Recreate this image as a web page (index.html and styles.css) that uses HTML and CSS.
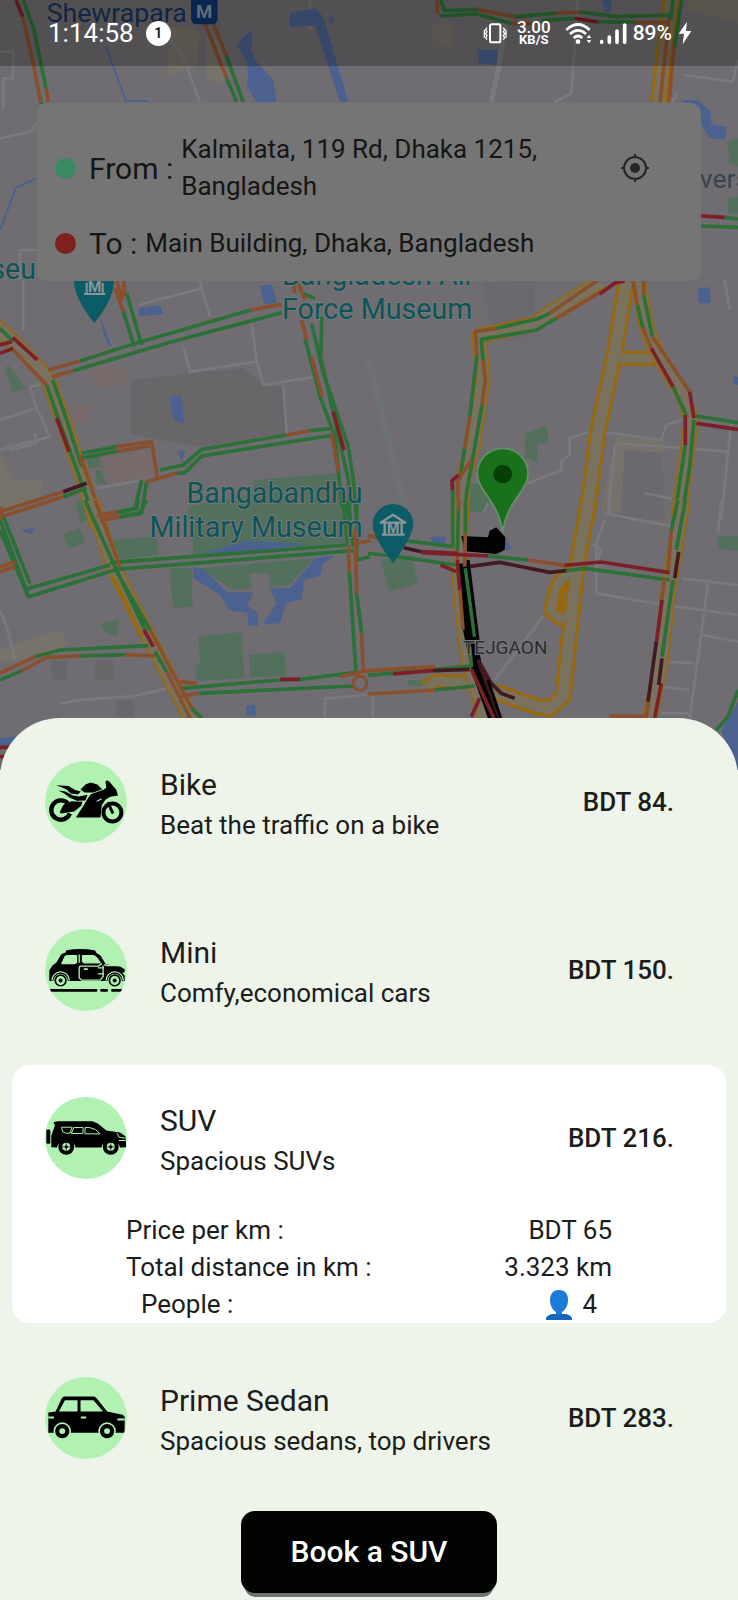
FILE: index.html
```html
<!DOCTYPE html>
<html lang="en">
<head>
<meta charset="utf-8">
<meta name="viewport" content="width=device-width, initial-scale=1">
<title>Choose a ride</title>
<link rel="stylesheet" href="styles.css">
</head>
<body>
<main class="screen">
  <section class="hero" aria-label="Route map">
    <svg class="map" viewBox="0 0 2214 2310" preserveAspectRatio="xMidYMin slice" role="img" aria-label="Traffic map of Dhaka">
      <rect width="2214" height="2310" fill="#6f6d71"/>

      <!-- north west -->
      <g>
        <path fill="#77736a" d="M510 80 600 90 590 200 500 230zM620 110 680 130 670 250 620 240z"/>
        <path class="lane" d="M0 155H40V235H10V330M0 415 90 395 110 370M560 200 600 306M60 840V750H110M480 70 560 190M930 0V90"/>
        <path class="water" d="M755 88 710 135 740 185 745 220 740 255 768 306H830L820 240 765 180 755 150zM870 40 945 25 970 50 1045 306H1020L945 75 870 82zM985 65 995 40 1003 70z"/>
        <path class="river" d="M318 140 378 303H445M0 690 48 563 110 535"/>
        <path class="go" d="M70 0 102 90 138 265M678 165 730 306M680 235 710 306M120 290 124 312"/>
        <path class="slow" d="M68 50 98 180 122 306M138 265 145 306M615 70 680 235M640 70 678 165"/>
        <path class="jam" d="M48 0 68 50"/>
        <text class="metro" x="140" y="66">Shewrapara</text>
        <rect x="573" y="-15" width="80" height="88" rx="16" fill="#10346a"/>
        <text x="588" y="54" font-size="56" font-weight="700" fill="#8190a5">M</text>
        <text class="place" x="108" y="838" text-anchor="end">Museu</text>
        <path class="slow" d="M350 843 368 900M372 843V890"/>
      </g>

      <!-- north east -->
      <g transform="translate(1104 0)">
        <path fill="#77736a" d="M195 70H250V140H195zM960 0H1110V70L960 30z"/>
        <path class="lane wide" d="M410 60 395 190 370 306"/>
        <path class="lane" d="M630 0 610 280 560 306M950 225 1095 245 1110 180M930 280 910 306"/>
        <path class="water" d="M330 148 388 150 386 195 332 190zM700 0H732L728 35 712 38zM940 300H990L1028 335 1030 372 1076 382 1070 418 1025 415 998 370 990 340z"/>
        <path class="park" d="M1078 430 1110 415V500L1085 490zM1080 595 1110 590V640L1080 640z"/>
        <path class="casing wide" d="M910 0 872 306"/>
        <path class="toll wide" d="M910 0 872 306"/>
        <path class="slow" d="M905 40 876 306M920 120 903 306M208 0V42M330 28 435 50 480 50M430 70H490M560 40 635 36M800 68H900"/>
        <path class="go" d="M218 0 230 32 330 28M215 48 325 42 430 70M440 50 560 40M520 62 620 55M635 36 745 50 905 45M690 66H800M915 0 908 60M940 0 920 140M1000 678 1110 682M1070 652 1110 657"/>
        <path class="jam" d="M620 55 690 66M1000 648 1070 652"/>
        <text x="995" y="563" font-size="80" fill="#38434e">vers</text>
      </g>

      <!-- centre west -->
      <g transform="translate(0 840)">
        <path fill="#69666a" d="M395 300 530 285 730 265 790 315 850 320 860 460 600 500 480 480 390 460z"/>
        <path fill="#776b6b" d="M265 260H380V310L290 325zM215 375H275V430H220zM305 530 455 515 470 590 320 610z"/>
        <path fill="#77736a" d="M0 520 40 600 130 600 120 660 0 690z"/>
        <path class="lane" d="M70 0V150M415 75 605 25 600 0M605 25 630 110M550 200 570 275 770 245 755 130M770 245 790 315 945 290M850 315 860 460M0 420 110 385 90 320 150 310M110 385 150 470 0 510M30 490 35 510 110 490 105 460M290 625 430 600"/>
        <path class="water" d="M415 85 480 75 490 103 418 108zM780 18 815 12 832 68 792 72zM508 350 545 348 553 432 522 420zM535 512H555L545 548zM300 110 335 200 325 195 310 160z"/>
        <path class="park" d="M15 265 25 255 78 325 38 338zM260 530H300L303 560 265 565zM285 570 305 572 318 610 290 612zM565 680 760 640 760 600 1010 580 1030 720H565zM228 665 255 655 275 720H240z"/>
        <path class="casing" d="M-20 130 40 185 140 290 190 420 250 600 290 740"/>
        <path class="toll" d="M-20 130 40 185 140 290 190 420 250 600 290 740"/>
        <path class="go" d="M0 145 40 185M140 315 180 430 285 720M158 300 200 420 245 560M240 243 400 192 752 90M220 272 500 190 845 98M380 40 425 195M370 95 403 200M245 520 350 500M245 534 350 514M480 570 550 555 605 508 860 465M930 452 990 446M530 580 555 578 605 528 990 467M425 600 405 685 350 697M440 605 425 700 350 712M190 650 260 625M915 175 960 350 1005 470 1030 720M935 130 970 280 1045 500 1060 600 1070 720M965 110 963 220M955 200 1000 400 1045 600 1050 720M905 40 945 55"/>
        <path class="slow" d="M345 25 370 95M370 0 375 40M145 270 240 243M155 290 220 272M40 210 140 315M350 500 455 485 472 592M350 514 450 498M440 605 530 580M860 465 930 452M752 90 845 73M895 10 915 60M880 0 885 40M905 120 920 180M935 230 967 350M995 460 1015 575M0 695 190 635M0 712 190 650M5 680V720M240 525 305 715M290 705 350 697M300 720 350 712"/>
        <path class="jam" d="M0 195 35 185M0 220 40 205M38 172 112 240M170 415 207 515M1000 395 1032 510"/>
        <path class="stop" d="M190 635 260 610"/>
        <path fill="#0b5c66" d="M222 0H342Q345 50 283 130 220 50 222 0z"/>
        <path d="M252 42H316M260 40V8M308 40V8" fill="none" stroke="#8a9698" stroke-width="6"/>
        <text x="264" y="36" font-size="46" font-weight="700" fill="#8a9698">M</text>
      </g>

      <!-- centre east -->
      <g transform="translate(1104 840)">
        <path fill="#6b696d" d="M760 460 880 480 890 720H740zM340 10 500 0 500 130 470 190 380 180z"/>
        <path fill="#75726c" d="M745 460 890 480V520L770 510 760 700 700 690z"/>
        <path d="M0 230 110 680" fill="none" stroke="#6f7275" stroke-width="22"/>
        <path class="lane" d="M1070 0 1085 90M480 610 580 570 582 540 605 525V475L665 455 740 460 880 480 895 435 970 410M745 490 1080 515 1060 720M830 640 910 655M740 500 720 700M1080 515 1090 430"/>
        <path class="water" d="M990 25 1025 22 1028 70 993 70zM1095 290H1110V315L1098 312z"/>
        <path class="park" d="M470 462 535 437 542 487 508 492 510 548 472 535zM305 612H355L365 680 330 695H300z"/>
        <path class="casing" d="M700 5 540 102 505 130 333 168 345 300 315 500 285 600 280 720"/>
        <path class="toll" d="M700 5 540 102 505 130 333 168 345 300 315 500 285 600 280 720"/>
        <path class="casing wide" d="M775 0 740 220 690 450 655 720"/>
        <path class="casing" d="M755 235H870"/>
        <path class="toll wide" d="M775 0 740 220 690 450 655 720"/>
        <path class="toll thin" d="M755 235H870"/>
        <path class="casing" d="M810 0 835 140 865 215 945 345 970 420 930 720"/>
        <path class="toll" d="M810 0 835 140 865 215 945 345 970 420 930 720"/>
        <path class="go" d="M545 100 505 118 385 145M565 115 505 150 340 178 345 240M327 225 305 410M342 375 315 530 295 640 292 720M290 505 275 600M254 630V720M808 75 825 145M827 45 853 170M915 320 955 405M952 495 918 720M978 420 965 560 940 720M985 408 1110 428M272 680V720"/>
        <path class="slow" d="M690 0 545 100M700 35 565 115M385 145 322 155 327 225M345 240 352 300 342 375M305 410 290 505M310 540 270 600V690M795 0 808 75M827 0V45M825 145 850 205M853 170 965 335"/>
        <path class="jam" d="M770 3 740 10 695 42M272 585 252 602 254 630M850 205 915 320M965 335 978 415M952 405V495M985 430 1110 448"/>
      </g>

      <!-- south west -->
      <g transform="translate(0 1500)">
        <path fill="#77736a" d="M0 450 100 410 180 390 205 430 130 470 0 490z"/>
        <path fill="#6a676b" d="M150 480H200V540H160zM285 480H340V540H285zM345 600H400V650H350z"/>
        <path class="lane" d="M0 330 20 380 45 480M180 612 240 600 400 588 530 560M975 654V595L1100 585"/>
        <path class="park" d="M575 40 1035 20 1040 130 580 165zM600 205 940 175 870 255 700 270zM508 205H575L578 320 520 323zM340 120 470 108 475 165 360 180zM190 100 240 85 255 128 205 146zM300 372 358 355 352 408 320 400zM595 408 725 397 733 535 588 542 585 500 600 490zM748 465 853 456 858 528 750 532zM228 10 245 0 262 60 240 68z"/>
        <path class="water" d="M610 160 740 122 920 132 800 150 650 158zM578 200 610 208 680 275 760 278 742 318 772 335 775 378 745 375 742 338 688 332 660 285 580 235zM945 175 1005 165 970 190 960 228 912 240 905 298 858 310 840 370 790 373 825 310 800 265 870 265zM738 618 765 613 768 645 740 648zM60 90 105 85 95 103zM0 715 50 708 30 740 0 735z"/>
        <path fill="#6f6d71" d="M748 220H808V262L830 310 790 370 770 335 742 318 760 280z"/>
        <path class="casing" d="M275 0 340 200 460 440 580 670"/>
        <path class="toll" d="M275 0 340 200 460 440 580 670"/>
        <path class="casing edge" d="M338 230 425 410"/>
        <path class="go" d="M255 0 345 200 435 390M350 215 450 390M0 60 78 268 330 195M10 50 90 250M0 90 85 290 345 210M330 188 1045 135M345 208 1060 152M105 470 180 450 445 437M0 540 65 512M240 468 375 464M465 455 500 515M575 625 605 654M545 565 840 540 900 538 1065 518M595 580 1060 558M1048 215 1068 520M1070 280 1085 400M1040 0 1060 140M1030 0 1042 130M1070 10V180L1110 170M440 0 420 38 360 50M415 0 410 25 350 38"/>
        <path class="slow" d="M285 0 360 200M0 200 45 185M0 215 45 200M0 520 105 470M65 512 140 472 240 468M375 464 465 468M450 390 575 625M500 515 570 654M540 545 590 550M540 590 595 580M1045 135 1048 215M1065 90 1070 280M1085 400 1090 520M1020 530 1110 510M1075 130 1110 122M290 48 350 38M300 62 360 50"/>
        <circle cx="1080" cy="550" r="21" fill="none" stroke="#8a4f2c" stroke-width="9"/>
        <path class="jam" d="M432 390 460 440M840 538H900M0 742H30M0 770H12"/>
      </g>

      <!-- south east -->
      <g transform="translate(1104 1500)">
        <path class="lane" d="M710 40 915 80M710 60 685 130V280L860 310 1110 345M670 130 700 150 685 190M940 235 1110 255M1020 250 1000 400 965 654M1000 405 1110 425M890 485 980 490M880 560 965 570M880 640H960M1060 0 1050 100M525 350 380 540M310 38 350 30 360 10M15 580V654"/>
        <path class="park" d="M38 180 130 165 150 250 65 275zM1050 110 1110 108V152L1052 148zM300 0H350L345 35 310 38zM120 540H200V560L120 556z"/>
        <path class="water" d="M188 110H232V130H192zM410 110 432 148 390 152zM1110 605 1060 690 1110 810z"/>
        <path class="casing" d="M310 545 200 545 172 565M605 215 570 250 548 330 575 355 610 350"/>
        <path class="casing wide" d="M662 0 625 210 585 590 545 626 500 618 380 575"/>
        <path class="toll thin" d="M310 545 200 545 172 565M605 215 570 250 548 330 575 355 610 350"/>
        <path class="toll wide" d="M662 0 625 210 585 590 545 626 500 618 380 575"/>
        <path d="M582 270 575 330" stroke="#97690c" stroke-width="18" stroke-linecap="round" fill="none"/>
        <path class="casing" d="M945 0 900 280 880 480 845 660M280 0 275 250 295 450 350 660"/>
        <path class="toll" d="M945 0 900 280 880 480 845 660M280 0 275 250 295 450 350 660"/>
        <path fill="#020203" d="M280 108 360 112 365 92 385 82 412 112 410 150 385 162 290 154z"/>
        <path d="M286 190 300 380 330 520 380 660" fill="none" stroke="#020203" stroke-width="34"/>
        <path class="go" d="M254 0V140L0 108M272 0 268 150M292 0V110M0 160 75 168 265 195M360 168 480 180M595 212 650 205 905 240M930 0 910 90M952 0 925 150M915 240 882 470M292 205 320 410M305 440 310 498 0 526M200 570 320 558M1110 570 1080 650 1045 690"/>
        <path class="slow" d="M910 90 900 220M480 180 590 196M268 150V180M292 100 290 200M890 235 880 310M0 512 200 500M0 582 200 570M275 260 285 390M842 605 835 650 725 648M0 105 110 140M272 0V30"/>
        <path class="jam" d="M160 155 270 160M160 158 360 168M218 195 265 215M268 180 275 270M590 196 700 186 905 218M882 300 865 430M75 522 195 512M310 508 380 660M335 595 310 650M880 550 860 654"/>
        <path class="stop" d="M108 143 160 155M300 200 395 187 545 217 595 212M932 155 920 235M865 425 840 605M882 475 872 555M195 512 305 508M330 480 370 550 400 580 440 595M330 480 395 654"/>
        <path d="M300 180 330 420M360 540 398 654" fill="none" stroke="#020203" stroke-width="9"/>
        <text x="285" y="462" font-size="57" fill="#2c2c2f" stroke="#77767a" stroke-width="6" paint-order="stroke">TEJGAON</text>
        <path fill="#0b5c66" d="M75 12A61 61 0 0 1 136 73Q134 110 75 190 14 110 14 73A61 61 0 0 1 75 12z"/>
        <path d="M38 68 75 44 112 68zM42 104H110M50 102V68M101 102V68" fill="none" stroke="#8a9698" stroke-width="7"/>
        <text x="57" y="98" font-size="42" font-weight="700" fill="#8a9698">M</text>
      </g>

      <!-- place labels and destination pin -->
      <text class="place" x="846" y="854">Bangladesh Air</text>
      <text class="place" x="846" y="957">Force Museum</text>
      <text class="place" x="1088" y="1508" text-anchor="end">Bangabandhu</text>
      <text class="place" x="1088" y="1610" text-anchor="end">Military Museum</text>
      <path fill="#1a711b" stroke="#6a906b" stroke-width="5" d="M1508 1345A76 76 0 0 1 1584 1421C1584 1475 1520 1500 1508 1598 1496 1500 1432 1475 1432 1421A76 76 0 0 1 1508 1345z"/>
      <circle cx="1508" cy="1422" r="28" fill="#053f06"/>
    </svg>

    <div class="overlay">
      <header class="status">
        <span class="status__left">
          <time class="status__time">1:14:58</time>
          <span class="status__count">1</span>
        </span>
        <span class="status__right">
          <svg width="24" height="24" viewBox="0 0 72 72" fill="none" stroke="#fff" aria-label="Vibrate" role="img">
            <rect x="21" y="10" width="31" height="54" rx="5" stroke-width="6"/>
            <path d="M12 20 8 26 12 32 8 38 12 44 8 50 12 56M4 26V50M61 20 65 26 61 32 65 38 61 44 65 50 61 56M69 26V50" stroke-width="4"/>
          </svg>
          <span class="status__speed"><b>3.00</b><small>KB/S</small></span>
          <svg width="28" height="24" viewBox="0 0 84 72" fill="none" stroke="#fff" aria-label="Wi-Fi" role="img">
            <path d="M4 27Q39-6 74 27M15 39Q39 17 63 39M26 51Q39 39 52 51" stroke-width="8"/>
            <circle cx="39" cy="62" r="7" fill="#fff" stroke="none"/>
            <path d="M65 51 72 41 79 51zM65 57 72 67 79 57z" fill="#fff" stroke="none"/>
          </svg>
          <svg width="28" height="24" viewBox="0 0 84 72" stroke="#fff" stroke-width="11" stroke-linecap="round" aria-label="Signal" role="img">
            <path d="M8 62V64M31 48V64M54 30V64M77 12V64"/>
          </svg>
          <span class="status__battery">89%</span>
          <svg width="14" height="24" viewBox="0 0 42 72" fill="#fff" aria-label="Charging" role="img"><path d="M27 2 2 38H18L14 70 40 30H24z"/></svg>
        </span>
      </header>

      <section class="trip" aria-label="Trip">
        <div class="trip__row">
          <span class="dot dot--from"></span>
          <span class="trip__label">From :</span>
          <span class="trip__place">Kalmilata, 119 Rd, Dhaka 1215, Bangladesh</span>
          <button class="locate" type="button" aria-label="Use my location">
            <svg width="30" height="30" viewBox="0 0 30 30" fill="none" stroke="#262626" stroke-width="2">
              <circle cx="15" cy="15" r="11"/><circle cx="15" cy="15" r="5" fill="#262626" stroke="none"/>
              <path d="M15 1V5M15 25V29M1 15H5M25 15H29"/>
            </svg>
          </button>
        </div>
        <div class="trip__row">
          <span class="dot dot--to"></span>
          <span class="trip__label">To :</span>
          <span class="trip__place">Main Building, Dhaka, Bangladesh</span>
        </div>
      </section>
    </div>
  </section>

  <section class="sheet" aria-label="Rides">
    <ul class="rides">
      <li class="ride">
        <button class="ride__head" type="button">
          <svg class="ride__icon" viewBox="44 32 247 247" aria-hidden="true">
            <path d="M78 105 115 107 135 119 152 124 143 133 122 130 108 117z"/>
            <path d="M84 121 106 124 128 136 146 139 172 134 166 151 140 152 119 143 103 131z"/>
            <path d="M151 118 166 103 181 97 202 103 216 117 190 127 163 127z"/>
            <path d="M226 94 232 90 239 95 252 111 258 117 264 136 240 140 226 149 215 165 211 202H137L151 180 157 171 173 145 182 132 222 118 229 112z"/>
            <path d="M100 164 124 153 157 155 153 167 132 184 91 190 89 184z"/>
            <path d="M113 160A29 29 0 1 0 119 190" fill="none" stroke="#000" stroke-width="13"/>
            <circle cx="247" cy="187" r="27" fill="none" stroke="#000" stroke-width="12"/>
            <path d="M235 160 247 187" stroke="#000" stroke-width="9" stroke-linecap="round"/>
            <path d="M197 153 214 144 215 148 202 154z" fill="#b1f2b2"/>
          </svg>
          <span class="ride__text"><span class="ride__name">Bike</span><span class="ride__note">Beat the traffic on a bike</span></span>
          <span class="ride__price">BDT 84.</span>
        </button>
      </li>
      <li class="ride">
        <button class="ride__head" type="button">
          <svg class="ride__icon" viewBox="44 41 247 247" aria-hidden="true">
            <path d="M57 198V165L67 150 78 143 93 117 107 111V106Q150 97 195 106L199 113 211 121 227 147 270 154 284 162V170L277 174 284 181V198H276A22 22 0 0 0 232 198H113A22 22 0 0 0 69 198z"/>
            <g fill="none" stroke="#b1f2b2" stroke-width="4" stroke-linejoin="round">
              <path fill="#b1f2b2" d="M95 145 105 123 112 121H139V142L134 145zM157 121H190L199 127 210 143H163L157 139z"/>
              <path d="M147 118V143M147 155V188L154 195H210L219 184V151M147 155 152 153H205L215 145M203 158H222M203 176H222M222 148 230 151H285"/>
              <path d="M65 196A26 26 0 0 1 117 196M228 196A26 26 0 0 1 280 196"/>
            </g>
            <path d="M161 162H173" stroke="#b1f2b2" stroke-width="5"/>
            <g fill="#b1f2b2" stroke="#000" stroke-width="5"><circle cx="91" cy="196" r="16"/><circle cx="254" cy="196" r="16"/></g>
            <circle cx="91" cy="196" r="6"/><circle cx="254" cy="196" r="6"/>
            <path d="M48 226H198M214 226H230M247 226H288" stroke="#000" stroke-width="8" stroke-linecap="round"/>
          </svg>
          <span class="ride__text"><span class="ride__name">Mini</span><span class="ride__note">Comfy,economical cars</span></span>
          <span class="ride__price">BDT 150.</span>
        </button>
      </li>
      <li class="ride ride--selected">
        <button class="ride__head" type="button" aria-pressed="true">
          <svg class="ride__icon" viewBox="44 36 247 247" aria-hidden="true">
            <path d="M69 112 82 109H187L203 116 229 137 270 143 286 154 289 187 270 188A29 29 0 0 0 214 188H136A29 29 0 0 0 80 188L63 187V152L74 121z"/>
            <rect x="48" y="134" width="12" height="43" rx="4"/>
            <g fill="none" stroke="#b1f2b2" stroke-width="3" stroke-linejoin="round">
              <path d="M94 127H126L119 145H106L97 140zM131 128H159L158 146H123zM165 128H178L196 134 210 147H164zM261 145 267 157 285 160M266 167H286"/>
            </g>
            <circle cx="108" cy="186" r="24"/><circle cx="242" cy="186" r="24"/>
            <g fill="#b1f2b2"><circle cx="108" cy="186" r="12"/><circle cx="242" cy="186" r="12"/></g>
            <path d="M108 175V197M97 186H119M242 175V197M231 186H253" stroke="#000" stroke-width="2"/>
            <circle cx="108" cy="186" r="5"/><circle cx="242" cy="186" r="5"/>
          </svg>
          <span class="ride__text"><span class="ride__name">SUV</span><span class="ride__note">Spacious SUVs</span></span>
          <span class="ride__price">BDT 216.</span>
        </button>
        <dl class="facts">
          <div class="facts__row"><dt>Price per km :</dt><dd>BDT 65</dd></div>
          <div class="facts__row"><dt>Total distance in km :</dt><dd>3.323 km</dd></div>
          <div class="facts__row facts__row--inset"><dt>People :</dt><dd>
            <svg class="person" width="26" height="30" viewBox="0 0 26 30" aria-hidden="true">
              <path d="M13 0C19 0 22 4 22 10 22 16 19 20 16 22V24C21 24 26 25 26 30H0C0 25 5 24 10 24V22C7 20 4 16 4 10 4 4 7 0 13 0z" fill="#1b7bd8"/>
              <path d="M0 30C0 25 5 24 10 24Q13 26 16 24C21 24 26 25 26 30z" fill="#1765bb"/>
            </svg>4</dd></div>
        </dl>
      </li>
      <li class="ride">
        <button class="ride__head" type="button">
          <svg class="ride__icon" viewBox="44 33 247 247" aria-hidden="true">
            <path fill-rule="evenodd" d="M54 140 76 137 95 96 101 92H192L199 96 231 137 278 147 284 153V201H54zM86 137 104 103H142V137zM151 103H190L219 137H151z"/>
            <path d="M152 155H168M54 155H71M262 161H284" stroke="#b1f2b2" stroke-width="6"/>
            <g stroke="#b1f2b2" stroke-width="5"><circle cx="96" cy="196" r="24"/><circle cx="231" cy="196" r="24"/></g>
            <g fill="#b1f2b2"><circle cx="96" cy="196" r="9"/><circle cx="231" cy="196" r="9"/></g>
          </svg>
          <span class="ride__text"><span class="ride__name">Prime Sedan</span><span class="ride__note">Spacious sedans, top drivers</span></span>
          <span class="ride__price">BDT 283.</span>
        </button>
      </li>
    </ul>
    <button class="book" type="button">Book a SUV</button>
  </section>
</main>
</body>
</html>
```

FILE: styles.css
```css
* { box-sizing: border-box; }

body {
  margin: 0;
  background: #eef4ea;
  color: #1b1d1a;
  font-family: Roboto, "Noto Sans", sans-serif;
  font-size: 26px;
  line-height: 37px;
}

button {
  border: 0;
  padding: 0;
  background: none;
  color: inherit;
  font: inherit;
  text-align: left;
  cursor: pointer;
}

.screen {
  display: flex;
  flex-direction: column;
  min-height: 100vh;
}

/* Map with the trip card on top of it */
.hero { display: grid; }

.map,
.overlay { grid-area: 1 / 1; min-width: 0; }

.map {
  display: block;
  width: 100%;
  height: 100%;
}

.map path { stroke-linejoin: round; }
.water { fill: #4b6190; }
.park { fill: #53705c; }
.river { fill: none; stroke: #4b6190; stroke-width: 6; }
.lane { fill: none; stroke: #7a797d; stroke-width: 8; }
.lane.wide { stroke-width: 16; }
.go, .slow, .jam, .stop { fill: none; stroke-width: 11; }
.go { stroke: #2b7036; }
.slow { stroke: #8a4f2c; }
.jam { stroke: #7d1f28; }
.stop { stroke: #421a20; }
.casing { fill: none; stroke: #97690c; stroke-width: 46; }
.casing.wide { stroke-width: 52; }
.casing.edge { stroke-width: 12; }
.toll { fill: none; stroke: #78725f; stroke-width: 36; }
.toll.wide { stroke-width: 34; }
.toll.thin { stroke-width: 28; }
.metro { fill: #1a335c; font-size: 80px; }
.place {
  fill: #0b5558;
  stroke: #77767a;
  stroke-width: 6px;
  paint-order: stroke;
  font-size: 86px;
}

.status {
  display: flex;
  align-items: center;
  justify-content: space-between;
  height: 66px;
  padding: 0 46px 0 48px;
  background: rgba(0, 0, 0, 0.26);
  color: #fff;
}

.status__left,
.status__right { display: flex; align-items: center; }
.status__left { gap: 12px; }
.status__right { gap: 6px; }

.status__count {
  width: 25px;
  height: 25px;
  border-radius: 50%;
  background: #fff;
  color: #222;
  font-size: 14px;
  font-weight: 700;
  line-height: 25px;
  text-align: center;
}

.status__speed {
  display: flex;
  flex-direction: column;
  align-items: center;
  margin: 0 8px 0 4px;
  font-size: 17px;
  line-height: 14px;
}

.status__speed b { font-weight: 500; }
.status__speed small { font-size: 13px; font-weight: 700; line-height: 12px; }
.status__battery { font-size: 21px; font-weight: 500; }

.trip {
  display: flex;
  flex-direction: column;
  gap: 20px;
  margin: 37px;
  padding: 28px 18px 19px;
  border-radius: 10px;
  background: #757575;
  color: #161616;
}

.trip__row { display: flex; align-items: center; }
.trip__label { margin: 0 8px 0 13px; font-size: 30px; white-space: nowrap; }
.trip__place { flex: 1; }

.dot {
  flex: none;
  width: 21px;
  height: 21px;
  border-radius: 50%;
}

.dot--from { background: #3a8a61; }
.dot--to { background: #7e211c; }
.locate { flex: none; margin: 0 33px; height: 30px; line-height: 0; }

/* Ride list */
.sheet {
  position: relative;
  flex: 1;
  display: flex;
  flex-direction: column;
  align-items: center;
  margin-top: -52px;
  padding: 11px 12px 8px;
  border-radius: 60px 60px 0 0;
  background: #eef4ea;
}

.rides {
  display: flex;
  flex-direction: column;
  gap: 22px;
  align-self: stretch;
  margin: 0;
  padding: 0;
  list-style: none;
}

.ride { border-radius: 18px; }
.ride--selected { background: #fff; }

.ride__head {
  display: flex;
  align-items: center;
  gap: 33px;
  width: 100%;
  height: 146px;
  padding: 0 52px 0 33px;
}

.ride__icon {
  flex: none;
  width: 82px;
  height: 82px;
  border-radius: 50%;
  background: #b1f2b2;
}

.ride__text {
  flex: 1;
  display: flex;
  flex-direction: column;
  padding-top: 2px;
}

.ride__name { font-size: 30px; line-height: 44px; }
.ride__price { font-weight: 500; }

.facts { margin: 0; padding-top: 1px; }

.facts__row {
  display: flex;
  justify-content: space-between;
  padding: 0 114px;
}

.facts__row--inset { padding: 0 129px; }
.facts dd { display: flex; align-items: center; gap: 10px; margin: 0; }

.book {
  min-width: 256px;
  height: 82px;
  margin-top: 20px;
  padding-bottom: 2px;
  border-radius: 14px;
  background: #010401;
  box-shadow: 0 8px 0 -4px #6f736d;
  color: #fff;
  font-size: 30px;
  font-weight: 500;
  text-align: center;
}
```
